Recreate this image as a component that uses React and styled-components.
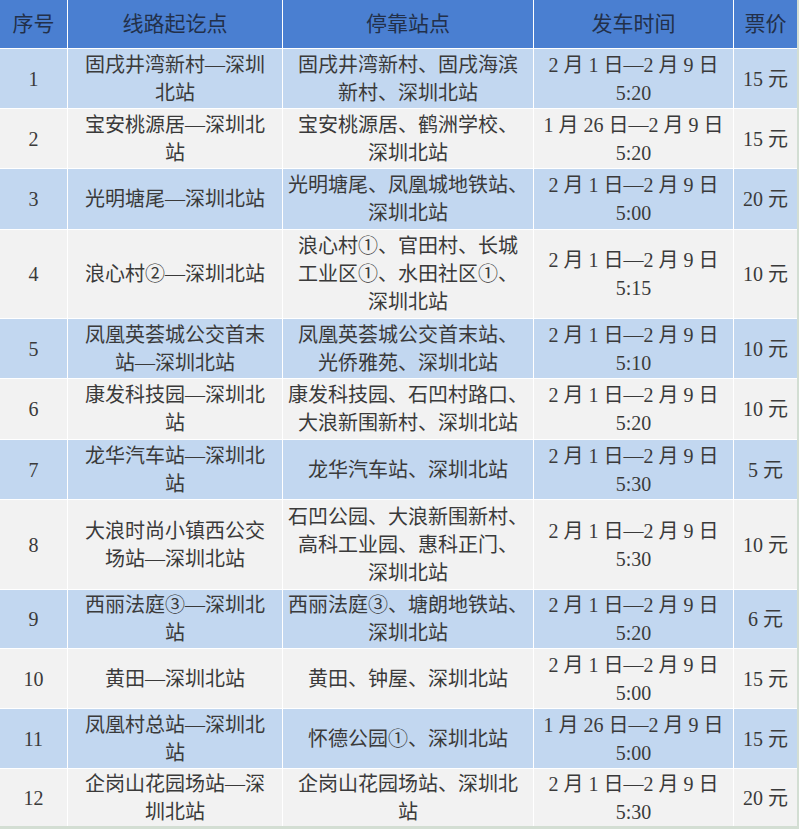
import React from "react";
import styled, { createGlobalStyle } from "styled-components";

const GlobalStyle = createGlobalStyle`
  body {
    margin: 0;
    background: #ffffff;
    font-family: "Liberation Serif", "Noto Sans CJK SC", serif;
  }
`;

const Table = styled.div`
  width: 797px;
  display: flex;
  flex-direction: column;
  gap: 1px;
  background: #ffffff;
  border-right: 2px solid #d3ded3;
  border-bottom: 3px solid #d3ded3;
`;

const Row = styled.div`
  display: grid;
  grid-template-columns: 67px 214px 250px 199px 63px;
  column-gap: 1px;
  height: ${(p) => p.$h}px;
`;

const Cell = styled.div`
  display: flex;
  align-items: center;
  justify-content: center;
  text-align: center;
  font-size: 20px;
  line-height: 28px;
  color: #3a3a3a;
  background: ${(p) => (p.$tone === "blue" ? "#c2d7f0" : "#f2f2f2")};
  overflow: hidden;
`;

const HeadCell = styled(Cell)`
  background: #4a7fd1;
  color: #22304a;
  font-size: 21px;
`;

const rows = [
  { h: 59, no: "1", route: ["固戌井湾新村—深圳", "北站"], stops: ["固戌井湾新村、固戌海滨", "新村、深圳北站"], time: ["2 月 1 日—2 月 9 日", "5:20"], price: "15 元" },
  { h: 59, no: "2", route: ["宝安桃源居—深圳北", "站"], stops: ["宝安桃源居、鹤洲学校、", "深圳北站"], time: ["1 月 26 日—2 月 9 日", "5:20"], price: "15 元" },
  { h: 60, no: "3", route: ["光明塘尾—深圳北站"], stops: ["光明塘尾、凤凰城地铁站、", "深圳北站"], time: ["2 月 1 日—2 月 9 日", "5:00"], price: "20 元" },
  { h: 88, no: "4", route: ["浪心村②—深圳北站"], stops: ["浪心村①、官田村、长城", "工业区①、水田社区①、", "深圳北站"], time: ["2 月 1 日—2 月 9 日", "5:15"], price: "10 元" },
  { h: 59, no: "5", route: ["凤凰英荟城公交首末", "站—深圳北站"], stops: ["凤凰英荟城公交首末站、", "光侨雅苑、深圳北站"], time: ["2 月 1 日—2 月 9 日", "5:10"], price: "10 元" },
  { h: 60, no: "6", route: ["康发科技园—深圳北", "站"], stops: ["康发科技园、石凹村路口、", "大浪新围新村、深圳北站"], time: ["2 月 1 日—2 月 9 日", "5:20"], price: "10 元" },
  { h: 59, no: "7", route: ["龙华汽车站—深圳北", "站"], stops: ["龙华汽车站、深圳北站"], time: ["2 月 1 日—2 月 9 日", "5:30"], price: "5 元" },
  { h: 89, no: "8", route: ["大浪时尚小镇西公交", "场站—深圳北站"], stops: ["石凹公园、大浪新围新村、", "高科工业园、惠科正门、", "深圳北站"], time: ["2 月 1 日—2 月 9 日", "5:30"], price: "10 元" },
  { h: 58, no: "9", route: ["西丽法庭③—深圳北", "站"], stops: ["西丽法庭③、塘朗地铁站、", "深圳北站"], time: ["2 月 1 日—2 月 9 日", "5:20"], price: "6 元" },
  { h: 59, no: "10", route: ["黄田—深圳北站"], stops: ["黄田、钟屋、深圳北站"], time: ["2 月 1 日—2 月 9 日", "5:00"], price: "15 元" },
  { h: 59, no: "11", route: ["凤凰村总站—深圳北", "站"], stops: ["怀德公园①、深圳北站"], time: ["1 月 26 日—2 月 9 日", "5:00"], price: "15 元" },
  { h: 57, no: "12", route: ["企岗山花园场站—深", "圳北站"], stops: ["企岗山花园场站、深圳北", "站"], time: ["2 月 1 日—2 月 9 日", "5:30"], price: "20 元" },
];

const Lines = ({ lines }) =>
  lines.map((line, i) => (
    <React.Fragment key={i}>
      {i > 0 && <br />}
      {line}
    </React.Fragment>
  ));

const App = () => {
  return (
    <>
      <GlobalStyle />
      <Table>
        <Row $h={48}>
          <HeadCell>序号</HeadCell>
          <HeadCell>线路起讫点</HeadCell>
          <HeadCell>停靠站点</HeadCell>
          <HeadCell>发车时间</HeadCell>
          <HeadCell>票价</HeadCell>
        </Row>
        {rows.map((r, i) => {
          const tone = i % 2 === 0 ? "blue" : "gray";
          return (
            <Row key={r.no} $h={r.h}>
              <Cell $tone={tone}>{r.no}</Cell>
              <Cell $tone={tone}>
                <div><Lines lines={r.route} /></div>
              </Cell>
              <Cell $tone={tone}>
                <div><Lines lines={r.stops} /></div>
              </Cell>
              <Cell $tone={tone}>
                <div><Lines lines={r.time} /></div>
              </Cell>
              <Cell $tone={tone}>{r.price}</Cell>
            </Row>
          );
        })}
      </Table>
    </>
  );
};

export default App;
